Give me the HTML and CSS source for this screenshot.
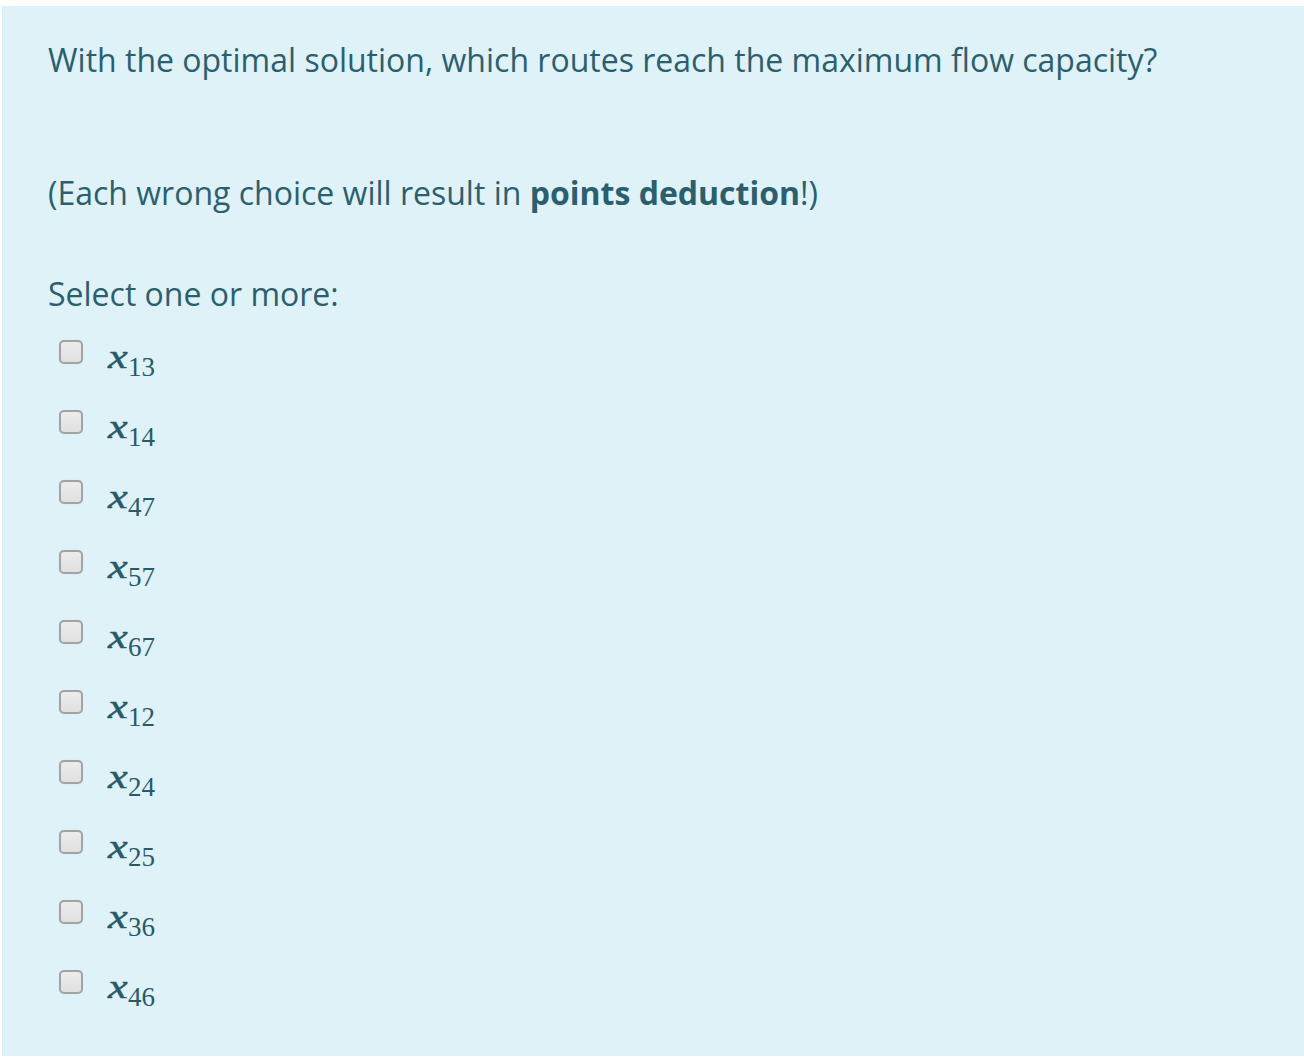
FILE: index.html
```html
<!DOCTYPE html>
<html>
<head>
<meta charset="utf-8">
<link rel="stylesheet" href="styles.css">
</head>
<body>
<div class="panel">
  <p class="q">With the optimal solution, which routes reach the maximum flow capacity?</p>
  <p class="note">(Each wrong choice will result in <strong>points deduction</strong>!)</p>
  <p class="prompt">Select one or more:</p>
  <div class="answers">
    <label class="opt"><span class="box"></span><span class="math"><i>x</i><sub>13</sub></span></label>
    <label class="opt"><span class="box"></span><span class="math"><i>x</i><sub>14</sub></span></label>
    <label class="opt"><span class="box"></span><span class="math"><i>x</i><sub>47</sub></span></label>
    <label class="opt"><span class="box"></span><span class="math"><i>x</i><sub>57</sub></span></label>
    <label class="opt"><span class="box"></span><span class="math"><i>x</i><sub>67</sub></span></label>
    <label class="opt"><span class="box"></span><span class="math"><i>x</i><sub>12</sub></span></label>
    <label class="opt"><span class="box"></span><span class="math"><i>x</i><sub>24</sub></span></label>
    <label class="opt"><span class="box"></span><span class="math"><i>x</i><sub>25</sub></span></label>
    <label class="opt"><span class="box"></span><span class="math"><i>x</i><sub>36</sub></span></label>
    <label class="opt"><span class="box"></span><span class="math"><i>x</i><sub>46</sub></span></label>
  </div>
</div>
</body>
</html>
```
FILE: styles.css
```css
html, body {
  margin: 0;
  padding: 0;
  background: #ffffff;
}
body {
  padding: 6px 0 4px 2px;
  font-family: "Open Sans", "Noto Sans", sans-serif;
  color: #2c5f6e;
}
.panel {
  background: #dff2f8;
  border-left: 1px solid #d8eef5;
  height: 1050px;
  box-sizing: border-box;
  padding: 32px 20px 0 45px;
}
.panel p {
  margin: 0;
  font-size: 32px;
  line-height: 44px;
}
.note {
  margin-top: 89px !important;
}
.note strong {
  font-weight: 700;
}
.prompt {
  margin-top: 57px !important;
}
.answers {
  display: flex;
  flex-direction: column;
  padding-top: 21px;
}
.opt {
  display: flex;
  align-items: flex-start;
  height: 70px;
  padding-left: 11px;
}
.box {
  width: 20px;
  height: 20px;
  margin-top: 3px;
  border: 2px solid #a3a3a3;
  border-radius: 5px;
  background: linear-gradient(#ececec, #e0e0e0);
  box-shadow: 0 0 1px rgba(0,0,0,0.15);
  flex: none;
}
.math {
  margin-left: 25px;
  font-family: "Liberation Serif", serif;
  color: #2a5a68;
  font-size: 34px;
  line-height: 40px;
}
.math i {
  display: inline-block;
  font-style: italic;
  transform: scaleX(1.3);
  transform-origin: left center;
  margin-right: 5px;
  -webkit-text-stroke: 0.5px #2a5a68;
}
.math sub {
  font-size: 27px;
  vertical-align: -8px;
}
```
